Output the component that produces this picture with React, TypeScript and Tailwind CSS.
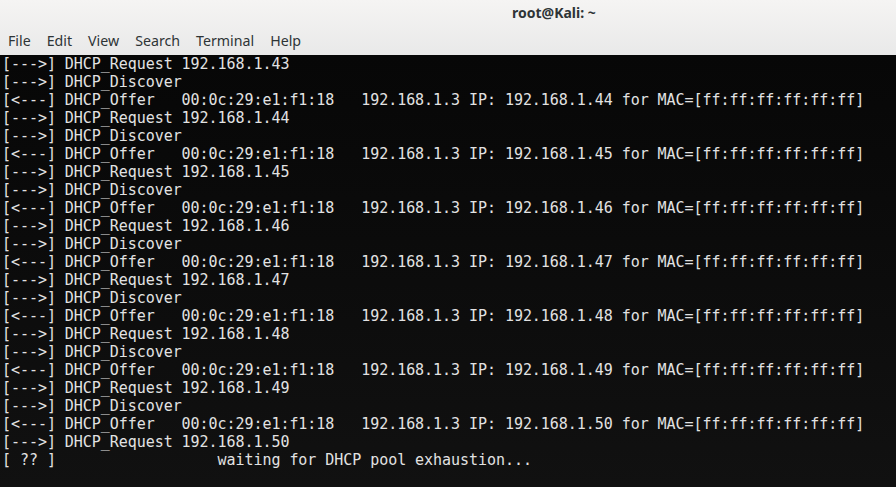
const menu = ["File", "Edit", "View", "Search", "Terminal", "Help"];

const offer = (ip: string) =>
  `[<---] DHCP_Offer   00:0c:29:e1:f1:18   192.168.1.3 IP: ${ip} for MAC=[ff:ff:ff:ff:ff:ff]`;

function buildLines() {
  const out: string[] = ["[--->] DHCP_Request 192.168.1.43"];
  for (let n = 44; n <= 50; n++) {
    out.push("[--->] DHCP_Discover");
    out.push(offer(`192.168.1.${n}`));
    out.push(`[--->] DHCP_Request 192.168.1.${n}`);
  }
  out.push("[ ?? ]                  waiting for DHCP pool exhaustion...");
  return out;
}

export default function App() {
  const lines = buildLines();

  return (
    <div className="w-[896px] h-[487px] flex flex-col overflow-hidden">
      {/* window chrome */}
      <div className="h-[55px] flex-none flex flex-col bg-gradient-to-b from-[#f5f4f3] to-[#e9e9e9] font-['Noto_Sans','Open_Sans',sans-serif] text-[#2e3436]">
        <div className="h-[26px] flex items-center pl-[512px]">
          <span className="text-[14px] font-bold leading-none">root@Kali: ~</span>
        </div>
        <div className="h-[29px] flex items-center gap-[16px] pl-[8px] pt-[1px] text-[14.2px] leading-none">
          {menu.map((m) => (
            <span key={m}>{m}</span>
          ))}
        </div>
      </div>

      {/* terminal */}
      <div className="flex-1 bg-gradient-to-b from-[#070707] to-[#111111] text-[#e2e2e2] pl-[2px] font-['DejaVu_Sans_Mono','Liberation_Mono',monospace] text-[15px] leading-[18px] tracking-[-0.05px]">
        {lines.map((l, i) => (
          <div key={i} className="whitespace-pre h-[18px]">
            {l}
          </div>
        ))}
      </div>
    </div>
  );
}
